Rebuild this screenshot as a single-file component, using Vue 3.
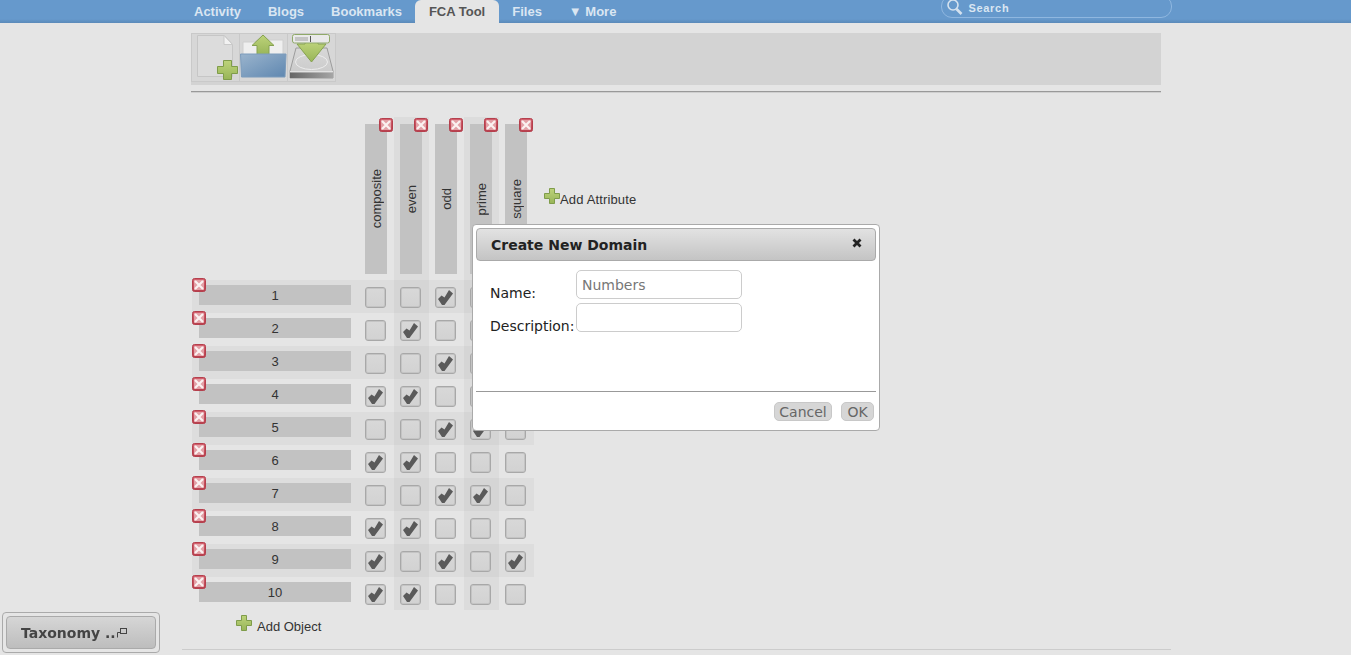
<script setup>
const tabs = [
  { label: 'Activity' },
  { label: 'Blogs' },
  { label: 'Bookmarks' },
  { label: 'FCA Tool', active: true },
  { label: 'Files' },
  { label: '▼ More' }
]
const attributes = ['composite', 'even', 'odd', 'prime', 'square']
const objects = [
  { name: '1', checks: [0, 0, 1, 0, 1] },
  { name: '2', checks: [0, 1, 0, 1, 0] },
  { name: '3', checks: [0, 0, 1, 1, 0] },
  { name: '4', checks: [1, 1, 0, 0, 1] },
  { name: '5', checks: [0, 0, 1, 1, 0] },
  { name: '6', checks: [1, 1, 0, 0, 0] },
  { name: '7', checks: [0, 0, 1, 1, 0] },
  { name: '8', checks: [1, 1, 0, 0, 0] },
  { name: '9', checks: [1, 0, 1, 0, 1] },
  { name: '10', checks: [1, 1, 0, 0, 0] }
]
</script>

<template>
  <div class="page">
    <svg class="defs" width="0" height="0" aria-hidden="true">
      <defs>
        <linearGradient id="redGrad" x1="0" y1="0" x2="0" y2="1">
          <stop offset="0" stop-color="#d4616f" />
          <stop offset="1" stop-color="#b8404e" />
        </linearGradient>
        <linearGradient id="greenGrad" x1="0" y1="0" x2="0" y2="1">
          <stop offset="0" stop-color="#bdd37a" />
          <stop offset="1" stop-color="#98b558" />
        </linearGradient>
        <linearGradient id="folderGrad" x1="0" y1="0" x2="1" y2="1">
          <stop offset="0" stop-color="#9ab4cd" />
          <stop offset="1" stop-color="#5f87b0" />
        </linearGradient>
        <linearGradient id="diskGrad" x1="0" y1="0" x2="0" y2="1">
          <stop offset="0" stop-color="#d8d8d8" />
          <stop offset="1" stop-color="#c8c8c8" />
        </linearGradient>
        <linearGradient id="diskBase" x1="0" y1="0" x2="1" y2="0">
          <stop offset="0" stop-color="#666" />
          <stop offset="1" stop-color="#a5a5a5" />
        </linearGradient>
        <symbol id="del" viewBox="0 0 14 14">
          <rect x="0.5" y="0.5" width="13" height="13" rx="2" fill="url(#redGrad)" stroke="#b5404d" />
          <rect x="2" y="2" width="10" height="10" fill="#e2a0a6" />
          <path d="M3 3l8 8M11 3l-8 8" stroke="#fbf1f1" stroke-width="2.200" />
        </symbol>
        <symbol id="plus" viewBox="0 0 16 16">
          <path d="M5.5.5h5v5h5v5h-5v5h-5v-5h-5v-5h5z" fill="url(#greenGrad)" stroke="#7f9c4a" />
        </symbol>
        <symbol id="check" viewBox="0 0 21 21">
          <path d="M3 12l3.500-3.500 3 2L14 3l4 3.500L9.500 18H7z" fill="#5a5a5a" />
        </symbol>
      </defs>
    </svg>

    <nav class="nav">
      <a v-for="tab in tabs" :key="tab.label" class="tab" :class="{ active: tab.active }">{{ tab.label }}</a>
      <div class="search">
        <svg class="search-icon" width="18" height="17" viewBox="0 0 18 17">
          <circle cx="7" cy="6" r="5" fill="none" stroke="#d5e2ef" stroke-width="1.6" />
          <path d="M10.500 10l5 5" stroke="#d5e2ef" stroke-width="2.600" />
        </svg>
        <span>Search</span>
      </div>
    </nav>

    <main class="main">
      <div class="inner">
        <div class="toolbar">
          <button class="tool" type="button" aria-label="New">
            <svg width="47" height="47" viewBox="0 0 47 47">
              <path d="M5.500 1.500h27l8 9v32h-35z" fill="#dcdcdc" stroke="#c6c6c6" />
              <path d="M32 1.500v9h8.500z" fill="#f2f2f2" stroke="#cacaca" />
              <path d="M31.500 26.500h8v6h6v7h-6v6h-8v-6h-6v-7h6z" fill="url(#greenGrad)" stroke="#7f9c4a" />
            </svg>
          </button>
          <button class="tool" type="button" aria-label="Open">
            <svg width="47" height="47" viewBox="0 0 47 47">
              <path d="M3 8h12l2-2h26v16H3z" fill="#efefef" stroke="#cfcfcf" />
              <path d="M23 1L34 11.500h-5V21H17v-9.500h-5z" fill="url(#greenGrad)" stroke="#86a250" />
              <path d="M0.500 20h45.500l-1 23h-43.500z" fill="url(#folderGrad)" stroke="#7c9cbc" />
            </svg>
          </button>
          <button class="tool" type="button" aria-label="Save">
            <svg width="47" height="47" viewBox="0 0 47 47">
              <path d="M8 14h31l6 23v7H2v-7z" fill="url(#diskGrad)" stroke="#9c9c9c" />
              <ellipse cx="23.500" cy="28" rx="16" ry="7.500" fill="none" stroke="#ececec" />
              <path d="M2 37h43v1.500H2z" fill="#e2e2e2" />
              <path d="M2 38.500h43V44H2z" fill="url(#diskBase)" />
              <path d="M17 8h13v2h8L23.500 28 9 10h8z" fill="url(#greenGrad)" stroke="#86a250" />
              <rect x="4.500" y="0.500" width="37" height="8.500" rx="2" fill="#e9e9e9" stroke="#8fa968" />
              <rect x="7" y="3" width="13" height="4" fill="#c4c4c4" />
              <path d="M22.500 2v6" stroke="#555" />
            </svg>
          </button>
        </div>
        <div class="rule"></div>

        <div class="context">
          <div class="head">
            <div class="head-spacer"></div>
            <div v-for="(attr, i) in attributes" :key="attr" class="head-cell" :class="{ shade: i % 2 === 1 }">
              <div class="attr-bar"><span>{{ attr }}</span></div>
              <svg class="del del-attr" width="14" height="14"><use href="#del" /></svg>
            </div>
            <div class="add-attr">
              <svg width="16" height="16"><use href="#plus" /></svg>
              <span>Add Attribute</span>
            </div>
          </div>

          <div v-for="(obj, r) in objects" :key="obj.name" class="row" :class="{ band: r % 2 === 0 }">
            <div class="name-cell">
              <svg class="del del-obj" width="14" height="14"><use href="#del" /></svg>
              <div class="name-bar">{{ obj.name }}</div>
            </div>
            <div v-for="(c, i) in obj.checks" :key="i" class="cell" :class="{ shade: i % 2 === 1 }">
              <div class="box">
                <svg v-if="c" width="21" height="21"><use href="#check" /></svg>
              </div>
            </div>
          </div>

          <div class="add-obj">
            <svg width="16" height="16"><use href="#plus" /></svg>
            <span>Add Object</span>
          </div>
        </div>
      </div>
      <div class="foot-rule"></div>
    </main>

    <div class="dialog">
      <div class="dialog-title">
        <span>Create New Domain</span>
        <svg width="10" height="10" viewBox="0 0 10 10"><path d="M1.500 1.500l7 7M8.500 1.500l-7 7" stroke="#222" stroke-width="2.800" /></svg>
      </div>
      <div class="dialog-body">
        <label class="lbl">Name:</label>
        <input class="field" placeholder="Numbers" />
        <label class="lbl">Description:</label>
        <input class="field" />
      </div>
      <div class="dialog-foot">
        <button class="btn cancel" type="button">Cancel</button>
        <button class="btn ok" type="button">OK</button>
      </div>
    </div>

    <div class="dock">
      <div class="dock-btn">
        <span>Taxonomy ..</span>
        <svg width="10" height="10" viewBox="0 0 10 10">
          <rect x="3.500" y="0.500" width="6" height="5" fill="none" stroke="#444" />
          <path d="M3 4.500H0.500V9.500" fill="none" stroke="#444" />
        </svg>
      </div>
    </div>
  </div>
</template>

<style>
html, body {
  margin: 0;
  background: #e5e5e5;
  overflow: hidden;
}
</style>

<style scoped>
.page {
  width: 1351px;
  height: 655px;
  overflow: hidden;
  background: #e5e5e5;
  font-family: "Liberation Sans", Arial, sans-serif;
  color: #333;
}
.defs { position: absolute; }
.nav {
  display: flex;
  align-items: stretch;
  height: 23px;
  padding-left: 180.5px;
  background: linear-gradient(to bottom, #6699cc 0, #6699cc 19px, #5b8ab9 23px);
  overflow: hidden;
}
.tab {
  padding: 0 13.5px;
  font-size: 13px;
  font-weight: 700;
  line-height: 24px;
  color: #dae6f2;
}
.tab.active {
  background: #e5e5e5;
  color: #555;
  border-radius: 6px 6px 0 0;
}
.search {
  display: flex;
  align-items: center;
  gap: 4px;
  box-sizing: border-box;
  position: relative;
  width: 231px;
  height: 23px;
  margin-top: -5px;
  margin-left: 311.5px;
  padding: 2px 0 0 4px;
  border: 1px solid #8fb7e0;
  border-radius: 11px;
  font-size: 11px;
  font-weight: 700;
  letter-spacing: 0.7px;
  color: #dae6f2;
}
.main {
  width: 989px;
  margin-left: 182px;
}
.inner {
  padding: 10px 0 0 9px;
}
.toolbar {
  display: flex;
  width: 970px;
  height: 52px;
  background: #d3d3d3;
}
.tool {
  width: 47px;
  height: 47px;
  padding: 0;
  border: 1px solid #c9c9c9;
  background: #d7d7d7;
  box-sizing: content-box;
  margin-right: -1px;
}
.tool svg { display: block; }
.rule {
  width: 970px;
  height: 1px;
  margin-top: 6px;
  background: #999;
  border-bottom: 1px solid #cfcfcf;
}
.context {
  margin: 24px 0 0 1px;
}
.head {
  display: flex;
  height: 163px;
}
.head-spacer { width: 167px; flex: none; }
.head-cell {
  position: relative;
  flex: none;
  width: 35px;
  padding: 7px 0 0 6px;
  box-sizing: border-box;
}
.shade { background: rgba(0, 0, 0, 0.035); }
.attr-bar {
  display: flex;
  align-items: center;
  justify-content: center;
  width: 22px;
  height: 150px;
  background: #c2c2c2;
  font-size: 13px;
}
.attr-bar span {
  writing-mode: vertical-rl;
  transform: rotate(180deg);
}
.del { display: block; }
.del-attr {
  position: absolute;
  left: 20px;
  top: 1px;
}
.add-attr {
  display: flex;
  align-items: flex-start;
  margin: 71px 0 0 10px;
  font-size: 13px;
  letter-spacing: 0.15px;
  white-space: nowrap;
}
.add-attr span { margin-top: 4px; }
.row {
  display: flex;
  width: 342px;
  height: 33px;
}
.row.band { background: rgba(0, 0, 0, 0.03); }
.name-cell {
  position: relative;
  flex: none;
  width: 167px;
  padding: 5px 8px 0 7px;
  box-sizing: border-box;
}
.del-obj {
  position: absolute;
  left: 0;
  top: -2px;
}
.name-bar {
  height: 20px;
  line-height: 21px;
  background: #c2c2c2;
  font-size: 13px;
  text-align: center;
}
.cell {
  flex: none;
  width: 35px;
  padding: 7px 0 0 6px;
  box-sizing: border-box;
}
.box {
  box-sizing: border-box;
  width: 21px;
  height: 21px;
  border: 1px solid #a8a8a8;
  box-shadow: inset 0 0 0 1px #c4c4c4;
  border-radius: 3px;
  background: linear-gradient(to bottom, #d8d8d8, #d2d2d2);
}
.box svg {
  display: block;
  margin: -1px;
}
.add-obj {
  display: flex;
  align-items: flex-start;
  margin-top: 5px;
  padding-left: 44px;
  height: 16px;
  font-size: 13px;
}
.add-obj span {
  margin: 4px 0 0 5px;
}
.foot-rule {
  height: 1px;
  margin-top: 18px;
  background: #ccc;
}
.dialog {
  position: fixed;
  left: 472px;
  top: 224px;
  box-sizing: border-box;
  width: 408px;
  height: 207px;
  padding: 3px;
  background: #fff;
  border: 1px solid #aaa;
  border-radius: 4px;
  font-family: "DejaVu Sans", sans-serif;
}
.dialog-title {
  display: flex;
  align-items: center;
  justify-content: space-between;
  box-sizing: border-box;
  height: 33px;
  padding: 0 13px 0 14px;
  border: 1px solid #aaa;
  border-radius: 4px;
  background: linear-gradient(to bottom, #e2e2e2, #c4c4c4);
  font-size: 14px;
  font-weight: 700;
  color: #222;
}
.dialog-title svg { margin-bottom: 3px; }
.dialog-body {
  display: grid;
  grid-template-columns: 86px 166px;
  grid-auto-rows: 29px;
  row-gap: 4px;
  height: 130px;
  box-sizing: border-box;
  padding: 9px 0 0 14px;
}
.lbl {
  align-self: end;
  margin-bottom: -1px;
  font-size: 14px;
  line-height: 14px;
  color: #222;
  white-space: nowrap;
}
.field {
  box-sizing: border-box;
  width: 166px;
  height: 29px;
  padding: 0 5px;
  border: 1px solid #ccc;
  border-radius: 5px;
  outline: none;
  font-family: "DejaVu Sans", sans-serif;
  font-size: 14px;
  background: #fff;
}
.field::placeholder {
  color: #777;
  opacity: 1;
}
.dialog-foot {
  display: flex;
  justify-content: flex-end;
  gap: 9px;
  box-sizing: border-box;
  height: 37px;
  padding: 10px 2px 0 0;
  border-top: 1px solid #999;
}
.btn {
  height: 19px;
  padding: 1px 0 0;
  border: 1px solid #c8c8c8;
  border-radius: 5px;
  background: #d6d6d6;
  color: #666;
  font-family: "DejaVu Sans", sans-serif;
  font-size: 14px;
  line-height: 17px;
}
.cancel { width: 58px; }
.ok { width: 33px; }
.dock {
  position: fixed;
  left: 2px;
  top: 612px;
  box-sizing: border-box;
  width: 158px;
  height: 41px;
  padding: 3px;
  border: 1px solid #aaa;
  border-radius: 4px;
}
.dock-btn {
  display: flex;
  align-items: center;
  box-sizing: border-box;
  height: 33px;
  padding: 0 0 0 14px;
  border: 1px solid #aaa;
  border-radius: 4px;
  background: linear-gradient(to bottom, #d6d6d6, #bdbdbd);
  font-family: "DejaVu Sans", sans-serif;
  font-size: 14px;
  font-weight: 700;
  color: #444;
  white-space: nowrap;
}
.dock-btn svg { margin: 0 0 0 1px; }
</style>
